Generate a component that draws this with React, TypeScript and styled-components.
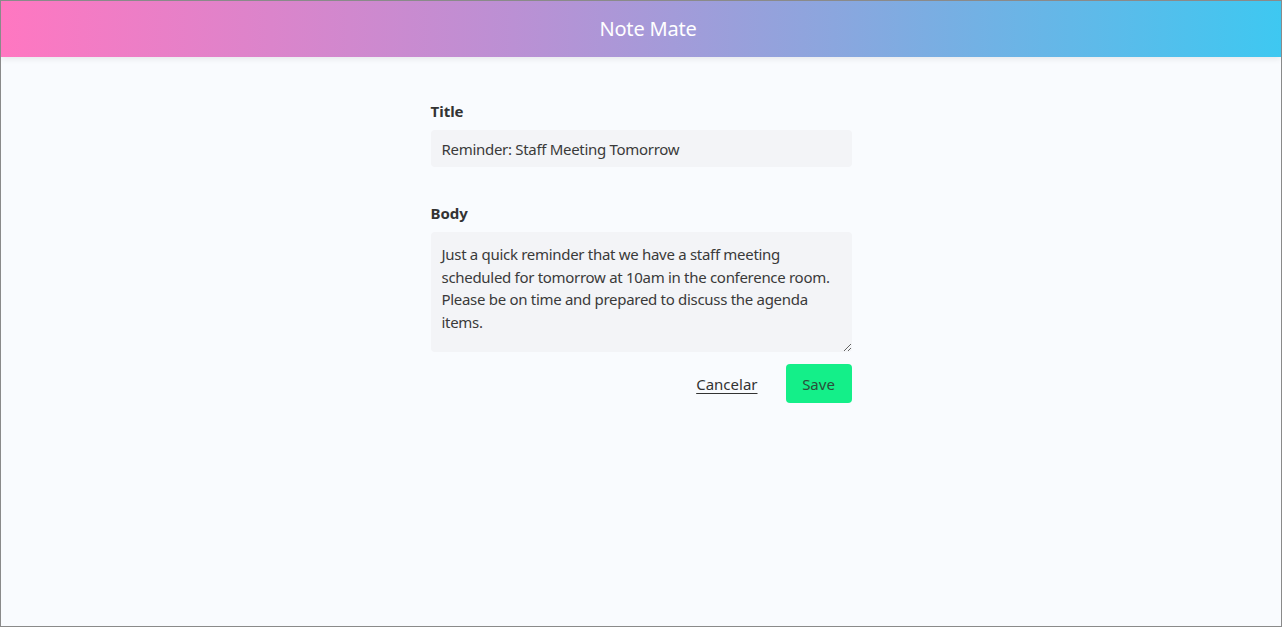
import React, { useState } from 'react';
import styled, { createGlobalStyle } from 'styled-components';

const GlobalStyle = createGlobalStyle`
* { box-sizing: border-box; }
html, body { margin: 0; padding: 0; }
body {
  font-family: "Noto Sans", "Open Sans", sans-serif;
  background: #f9fbfe;
  color: #333;
}
`;

const Page = styled.div`
height: 627px;
border: 1px solid #8a8a8a;
background: #f9fbfe;
display: flex;
flex-direction: column;
overflow: hidden;
`;

const Header = styled.header`
height: 56px;
flex-shrink: 0;
display: flex;
align-items: center;
justify-content: center;
padding: 0 0 2px 14px;
background: linear-gradient(90deg, #ff77c1 0%, #bb90d4 40%, #8ba6de 65%, #3ec8f1 100%);
box-shadow: 0 2px 6px rgba(0, 0, 0, 0.08);
`;

const Brand = styled.h1`
margin: 0;
font-size: 20px;
font-weight: 400;
color: #fff;
letter-spacing: -0.2px;
`;

const Form = styled.form`
width: 421px;
margin: 44px auto 0;
display: flex;
flex-direction: column;
`;

const Field = styled.div<{ $gap?: number }>`
display: flex;
flex-direction: column;
margin-bottom: ${(p) => p.$gap ?? 0}px;
`;

const Label = styled.label`
font-size: 15px;
font-weight: 700;
color: #333;
margin-bottom: 9px;
`;

const Input = styled.input`
height: 37px;
border: none;
border-radius: 4px;
background: #f3f4f7;
padding: 0 11px;
font-family: inherit;
font-size: 15px;
letter-spacing: -0.3px;
color: #3a3a3a;
outline: none;
`;

const TextArea = styled.textarea`
height: 120px;
border: none;
border-radius: 4px;
background: #f3f4f7;
padding: 11px 11px;
font-family: inherit;
font-size: 15px;
letter-spacing: -0.3px;
line-height: 22.6px;
color: #3a3a3a;
outline: none;
resize: vertical;
`;

const Actions = styled.div`
display: flex;
justify-content: flex-end;
align-items: center;
gap: 28px;
margin-top: 12px;
`;

const LinkButton = styled.button`
border: none;
background: none;
padding: 0;
font-family: inherit;
font-size: 15px;
color: #333;
text-decoration: underline;
text-underline-offset: 3px;
cursor: pointer;
`;

const SaveButton = styled.button`
width: 66px;
height: 39px;
border: none;
border-radius: 4px;
background: #14ef89;
font-family: inherit;
font-size: 15px;
color: #2b4d3a;
cursor: pointer;
`;

const App: React.FC = () => {
  const [title, setTitle] = useState('Reminder: Staff Meeting Tomorrow');
  const [body, setBody] = useState(
    'Just a quick reminder that we have a staff meeting scheduled for tomorrow at 10am in the conference room. Please be on time and prepared to discuss the agenda items.'
  );

  return (
    <Page>
      <GlobalStyle />
      <Header>
        <Brand>Note Mate</Brand>
      </Header>
      <Form onSubmit={(e) => e.preventDefault()}>
        <Field $gap={36}>
          <Label htmlFor="title">Title</Label>
          <Input id="title" value={title} onChange={(e) => setTitle(e.target.value)} />
        </Field>
        <Field>
          <Label htmlFor="body">Body</Label>
          <TextArea id="body" value={body} onChange={(e) => setBody(e.target.value)} />
        </Field>
        <Actions>
          <LinkButton type="button">Cancelar</LinkButton>
          <SaveButton type="submit">Save</SaveButton>
        </Actions>
      </Form>
    </Page>
  );
};

export default App;
